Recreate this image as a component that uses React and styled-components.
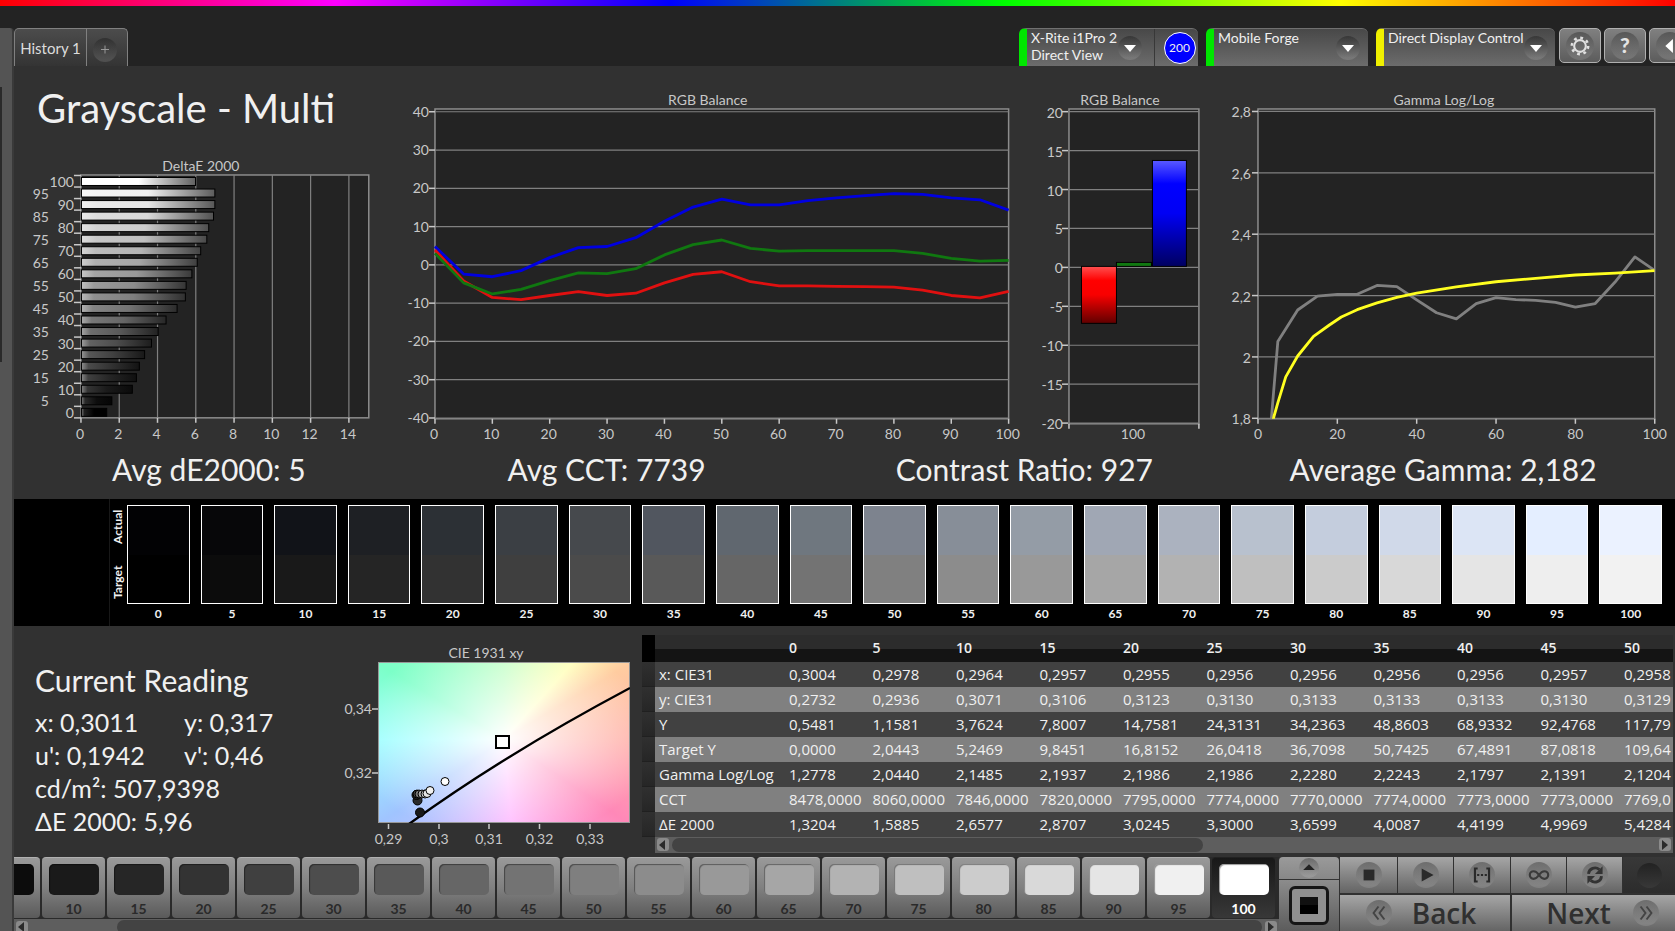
import React from "react";
import styled, { createGlobalStyle } from "styled-components";

const deltaE = [
  [100, 5.96], [95, 6.97], [90, 6.97], [85, 6.9], [80, 6.65], [75, 6.55], [70, 6.23],
  [65, 6.05], [60, 5.77], [55, 5.47], [50, 5.43], [45, 4.9969], [40, 4.4199], [35, 4.0087],
  [30, 3.6599], [25, 3.3], [20, 3.0245], [15, 2.8707], [10, 2.6577], [5, 1.5885], [0, 1.3204],
];

const balance = {
  "#0000e0": [4.8, -2.4, -3.1, -1.5, 1.9, 4.5, 4.8, 7.1, 11.4, 15.1, 17.2, 15.7, 15.7, 16.8, 17.5, 18.1, 18.6, 18.4, 17.5, 17, 14.3],
  "#e01010": [3.9, -4.2, -8.5, -9.1, -8, -7, -8, -7.4, -4.7, -2.5, -1.8, -4.4, -5.5, -5.5, -5.6, -5.7, -5.8, -6.6, -8, -8.6, -6.9],
  "#107810": [3, -4.7, -7.6, -6.4, -4.1, -2.1, -2.3, -1, 2.6, 5.3, 6.5, 4.3, 3.6, 3.7, 3.7, 3.7, 3.7, 3, 1.7, 1, 1.2],
};

const gamma = [1.2778, 2.05, 2.153, 2.198, 2.204, 2.204, 2.233, 2.229, 2.186, 2.144, 2.124, 2.174, 2.193, 2.187, 2.184, 2.178, 2.162, 2.174, 2.244, 2.326, 2.282];
const gammaTarget = [
  [3, 1.74], [4, 1.805], [5, 1.85], [7, 1.935], [10, 2.003], [14, 2.067], [18, 2.104], [21, 2.13], [25, 2.154],
  [30, 2.176], [35, 2.194], [40, 2.208], [50, 2.228], [60, 2.245], [70, 2.256], [80, 2.267], [90, 2.273], [100, 2.281],
];

const swatches = [
  [0, "#020204", "#000000"], [5, "#070709", "#0c0c0c"], [10, "#111318", "#191919"], [15, "#1e2024", "#252525"],
  [20, "#2c3035", "#323232"], [25, "#3b3f44", "#3f3f3f"], [30, "#46494d", "#4b4b4b"], [35, "#51565f", "#595959"],
  [40, "#60676f", "#666666"], [45, "#6f777f", "#737373"], [50, "#7d838e", "#808080"], [55, "#878e98", "#8c8c8c"],
  [60, "#949ca6", "#999999"], [65, "#a0a7b4", "#a6a6a6"], [70, "#abb2bf", "#b2b2b2"], [75, "#b8c1ce", "#bfbfbf"],
  [80, "#c4cddd", "#cbcbcb"], [85, "#d0d9e9", "#d8d8d8"], [90, "#dce5f5", "#e5e5e5"], [95, "#e4eeff", "#eeeeee"],
  [100, "#ebf2ff", "#f2f2f2"],
];

const levels = swatches.slice(2).map(([level]) => level);

const columns = [0, 5, 10, 15, 20, 25, 30, 35, 40, 45, 50];
const rows = [
  ["x: CIE31", "0,3004", "0,2978", "0,2964", "0,2957", "0,2955", "0,2956", "0,2956", "0,2956", "0,2956", "0,2957", "0,2958"],
  ["y: CIE31", "0,2732", "0,2936", "0,3071", "0,3106", "0,3123", "0,3130", "0,3133", "0,3133", "0,3133", "0,3130", "0,3129"],
  ["Y", "0,5481", "1,1581", "3,7624", "7,8007", "14,7581", "24,3131", "34,2363", "48,8603", "68,9332", "92,4768", "117,79"],
  ["Target Y", "0,0000", "2,0443", "5,2469", "9,8451", "16,8152", "26,0418", "36,7098", "50,7425", "67,4891", "87,0818", "109,64"],
  ["Gamma Log/Log", "1,2778", "2,0440", "2,1485", "2,1937", "2,1986", "2,1986", "2,2280", "2,2243", "2,1797", "2,1391", "2,1204"],
  ["CCT", "8478,0000", "8060,0000", "7846,0000", "7820,0000", "7795,0000", "7774,0000", "7770,0000", "7774,0000", "7773,0000", "7773,0000", "7769,0"],
  ["ΔE 2000", "1,3204", "1,5885", "2,6577", "2,8707", "3,0245", "3,3000", "3,6599", "4,0087", "4,4199", "4,9969", "5,4284"],
];

const range = (from, to, step) => {
  const out = [];
  for (let v = from; v <= to; v += step) out.push(v);
  return out;
};

const grey = (v) => `rgb(${Math.round(v)},${Math.round(v)},${Math.round(v)})`;

const DeltaEChart = () => {
  const left = 67;
  const top = 25;
  const unit = 19.15;
  const row = 11.55;
  return (
    <Chart viewBox="0 0 378 296" role="img" aria-label="DeltaE 2000 per gray level">
      <defs>
        {deltaE.map(([level]) => {
          const base = level * 2.55;
          return (
            <linearGradient id={`de${level}`} key={level}>
              <stop offset="0" stopColor={grey(Math.min(255, base + (255 - base) * 0.45))} />
              <stop offset="0.12" stopColor={grey(Math.min(255, base + (255 - base) * 0.12))} />
              <stop offset="0.5" stopColor={grey(base)} />
              <stop offset="1" stopColor={grey(base * 0.38)} />
            </linearGradient>
          );
        })}
      </defs>
      <text x="187" y="21" textAnchor="middle">DeltaE 2000</text>
      <Plot x={left} y={top} width="288" height="243" />
      {range(0, 14, 2).map((v) => (
        <g key={v}>
          {v > 0 && <Grid d={`M${left + v * unit} ${top}v243`} />}
          <Tick d={`M${left + v * unit} ${top + 243}v5`} />
          <text x={left + v * unit - 1} y="289" textAnchor="middle">{v}</text>
        </g>
      ))}
      {range(0, 21, 1).map((i) => (
        <Tick key={i} d={`M${left - 7} ${top + 0.5 + i * row}h7`} />
      ))}
      {deltaE.map(([level, value], i) => (
        <g key={level}>
          <rect x={left + 0.5} y={top + 2.5 + i * row} width={value * unit} height="8" fill={`url(#de${level})`} stroke="#000" />
          <text x={level % 10 ? 35 : 60} y={top + 12 + i * row} textAnchor="end">{level}</text>
        </g>
      ))}
    </Chart>
  );
};

const BalanceChart = () => {
  const x = (v) => 43 + v * 5.74;
  const y = (v) => 199 - v * 3.83;
  return (
    <Chart viewBox="0 0 636 380" role="img" aria-label="RGB balance by level">
      <text x="316" y="39" textAnchor="middle">RGB Balance</text>
      <Plot x="43" y="43" width="574" height="310" />
      {range(-40, 40, 10).map((v) => (
        <g key={v}>
          <Grid d={`M43 ${y(v)}h574`} />
          <Tick d={`M37 ${y(v)}h6`} />
          <text x="37" y={y(v) + 5} textAnchor="end">{v}</text>
        </g>
      ))}
      {range(0, 100, 10).map((v) => (
        <g key={v}>
          <Tick d={`M${x(v)} 353v5`} />
          <text x={x(v) - 1} y="373" textAnchor="middle">{v}</text>
        </g>
      ))}
      {Object.entries(balance).map(([color, values]) => (
        <Line key={color} stroke={color} points={values.map((v, i) => `${x(i * 5)},${y(v)}`).join(" ")} />
      ))}
    </Chart>
  );
};

const BalanceBars = () => {
  const y = (v) => 201.5 - v * 7.79;
  return (
    <Chart viewBox="0 0 190 380" role="img" aria-label="RGB balance at 100">
      <defs>
        <linearGradient id="barRed" x2="0" y2="1">
          <stop offset="0" stopColor="#ff5050" />
          <stop offset="0.25" stopColor="#ff0000" />
          <stop offset="0.5" stopColor="#f80000" />
          <stop offset="1" stopColor="#600000" />
        </linearGradient>
        <linearGradient id="barBlue" x2="0" y2="1">
          <stop offset="0" stopColor="#5a5aff" />
          <stop offset="0.22" stopColor="#0000ff" />
          <stop offset="0.5" stopColor="#0000f4" />
          <stop offset="1" stopColor="#000060" />
        </linearGradient>
      </defs>
      <text x="93" y="39" textAnchor="middle">RGB Balance</text>
      <Plot x="42" y="43" width="130" height="315" />
      {range(-20, 20, 5).map((v) => (
        <g key={v}>
          <Grid d={`M42 ${y(v)}h130`} />
          <Tick d={`M35 ${y(v)}h6`} />
          <text x="36" y={y(v) + 6} textAnchor="end">{v}</text>
        </g>
      ))}
      <Tick d="M42 358v5M172 358v5" />
      <text x="106" y="373" textAnchor="middle">100</text>
      <rect x="54.5" y="200.5" width="35" height="57" fill="url(#barRed)" stroke="#000" />
      <rect x="89.5" y="196.5" width="35" height="4" fill="#107810" stroke="#000" />
      <rect x="125.5" y="94.5" width="34" height="106" fill="url(#barBlue)" stroke="#000" />
    </Chart>
  );
};

const GammaChart = () => {
  const x = (v) => 41 + v * 3.97;
  const y = (v) => 45.5 + (2.8 - v) * 307;
  return (
    <Chart viewBox="0 0 458 380" role="img" aria-label="Gamma Log/Log">
      <clipPath id="gammaClip"><rect x="41" y="43" width="397" height="310" /></clipPath>
      <text x="227" y="39" textAnchor="middle">Gamma Log/Log</text>
      <Plot x="41" y="43" width="397" height="310" />
      {[2.8, 2.6, 2.4, 2.2, 2, 1.8].map((v) => (
        <g key={v}>
          <Grid d={`M41 ${y(v)}h397`} />
          <Tick d={`M35 ${y(v)}h6`} />
          <text x="34" y={y(v) + 6} textAnchor="end">{String(v).replace(".", ",")}</text>
        </g>
      ))}
      {range(0, 100, 20).map((v) => (
        <g key={v}>
          <Tick d={`M${x(v)} 353v5`} />
          <text x={x(v)} y="373" textAnchor="middle">{v}</text>
        </g>
      ))}
      <g clipPath="url(#gammaClip)">
        <Line stroke="#808080" points={gamma.map((v, i) => `${x(i * 5)},${y(v)}`).join(" ")} />
        <Line stroke="#ffff20" points={gammaTarget.map(([l, v]) => `${x(l)},${y(v)}`).join(" ")} />
      </g>
    </Chart>
  );
};

const CieChart = () => (
  <Chart viewBox="0 0 312 220" role="img" aria-label="CIE 1931 xy">
    <clipPath id="cieClip"><rect x="48" y="36" width="252" height="161" /></clipPath>
    <text x="156" y="32" textAnchor="middle">CIE 1931 xy</text>
    <foreignObject x="48" y="36" width="252" height="161"><CieField /></foreignObject>
    <rect x="48.5" y="36.5" width="251" height="160" fill="none" stroke="#989898" strokeWidth="1" />
    {[["0,34", 83], ["0,32", 147]].map(([label, y]) => (
      <g key={label}>
        <Tick d={`M42 ${y}h6`} />
        <text x="42" y={y + 5} textAnchor="end">{label}</text>
      </g>
    ))}
    {[["0,29", 58.5], ["0,3", 109], ["0,31", 159], ["0,32", 209.5], ["0,33", 260]].map(([label, x]) => (
      <g key={label}>
        <Tick d={`M${x} 198v5`} />
        <text x={x} y="218" textAnchor="middle">{label}</text>
      </g>
    ))}
    <g clipPath="url(#cieClip)">
      <path d="M79 198Q174 129 300 62" fill="none" stroke="#000" strokeWidth="2.4" />
      <g stroke="#000">
        <circle cx="90" cy="186.500" r="4.500" fill="#191919" />
        <circle cx="87.500" cy="174.500" r="4.500" fill="#2a2a2a" />
        <circle cx="86.500" cy="169" r="4.500" fill="#222" />
        <circle cx="87" cy="168" r="4" fill="#444" />
        <circle cx="89" cy="168" r="4" fill="#777" />
        <circle cx="92" cy="168" r="4" fill="#aaa" />
        <circle cx="95" cy="168" r="4" fill="#d0d0d0" />
        <circle cx="97" cy="167.500" r="4" fill="#e5e5e5" />
        <circle cx="100" cy="164.500" r="4" fill="#f2f2f2" />
        <circle cx="115" cy="155.500" r="4" fill="#fff" />
      </g>
      <rect x="166" y="110" width="13" height="12" fill="#fff" stroke="#000" strokeWidth="2" />
    </g>
  </Chart>
);

const Glyph = ({ size = 24, children }) => (
  <Round $size={size}>
    <svg width={size} height={size} viewBox="0 0 24 24" fill="none" aria-hidden="true">{children}</svg>
  </Round>
);

const Scroller = ({ start, width }) => (
  <ScrollTrack>
    <ScrollArrow aria-label="Scroll left"><svg width="11" height="12"><path d="M8 1v10L2 6z" fill="#2a2a2a" /></svg></ScrollArrow>
    <ScrollRail><ScrollThumb $start={start} $width={width} /></ScrollRail>
    <ScrollArrow aria-label="Scroll right"><svg width="11" height="12"><path d="M3 1v10l6-5z" fill="#2a2a2a" /></svg></ScrollArrow>
  </ScrollTrack>
);

const Device = ({ color, width, lines, children }) => (
  <DevicePanel $color={color} $width={width}>
    <DeviceButton aria-haspopup="menu">
      <span>{lines.map((line) => <DeviceLine key={line}>{line}</DeviceLine>)}</span>
      <Glyph><path d="M6 9h12l-6 7z" fill="#fff" /></Glyph>
    </DeviceButton>
    {children}
  </DevicePanel>
);

const App = () => (
  <>
    <GlobalStyle />
    <Page>
      <Rainbow />
      <Workspace>
        <SideEdge><SideSlot /></SideEdge>
        <Content>
          <TopBar>
            <Tabs>
              <Tab>History 1</Tab>
              <AddTab aria-label="Add tab">
                <Glyph><path d="M12 7.500v8M8 11.500h8" stroke="#999" /></Glyph>
              </AddTab>
            </Tabs>
            <Devices>
              <Device color="#00e600" width={179} lines={["X-Rite i1Pro 2", "Direct View"]}>
                <MeterMode><MeterCount>200</MeterCount></MeterMode>
              </Device>
              <Device color="#00e600" width={162} lines={["Mobile Forge"]} />
              <Device color="#f0f000" width={179} lines={["Direct Display Control"]} />
            </Devices>
            <Tools>
              <ToolButton aria-label="Settings">
                <Glyph size={28}>
                  <circle cx="12" cy="12" r="5" stroke="#e0e0e0" strokeWidth="1.800" />
                  <circle cx="12" cy="12" r="7" stroke="#e0e0e0" strokeWidth="2.200" strokeDasharray="2.400 3.098" />
                </Glyph>
              </ToolButton>
              <ToolButton aria-label="Help"><Glyph size={28}><QuestionMark x="12" y="18" textAnchor="middle">?</QuestionMark></Glyph></ToolButton>
              <ToolButton aria-label="Collapse"><Glyph size={28}><path d="M14.500 6v12L8 12z" fill="#fff" /></Glyph></ToolButton>
            </Tools>
          </TopBar>

          <Main>
            <Charts>
              <div>
                <Title>Grayscale - Multi</Title>
                <DeltaEChart />
              </div>
              <BalanceChart />
              <BalanceBars />
              <GammaChart />
            </Charts>
            <Stats>
              <Stat>Avg dE2000: 5</Stat>
              <Stat>Avg CCT: 7739</Stat>
              <Stat>Contrast Ratio: 927</Stat>
              <Stat>Average Gamma: 2,182</Stat>
            </Stats>

            <SwatchBand>
              <SwatchMargin />
              <SwatchSides><span>Target</span><span>Actual</span></SwatchSides>
              <SwatchGrid>
                {swatches.map(([level, actual, target]) => (
                  <SwatchItem key={level}>
                    <Swatch $actual={actual} $target={target} />
                    <SwatchLabel>{level}</SwatchLabel>
                  </SwatchItem>
                ))}
              </SwatchGrid>
            </SwatchBand>

            <Lower>
              <Reading>
                <ReadingTitle>Current Reading</ReadingTitle>
                <ReadingGrid>
                  <span>x: 0,3011</span><span>y: 0,317</span>
                  <span>u': 0,1942</span><span>v': 0,46</span>
                  <Wide>cd/m²: 507,9398</Wide>
                  <Wide>ΔE 2000: 5,96</Wide>
                </ReadingGrid>
              </Reading>
              <CieBox><CieChart /></CieBox>
              <DataPanel>
                <RowHandles>
                  <HeadHandle />
                  {rows.map(([name]) => <Handle key={name} />)}
                </RowHandles>
                <DataArea>
                  <DataScroll>
                    <Data>
                      <thead>
                        <tr>
                          <NameHead aria-label="Quantity" />
                          {columns.map((c) => <th key={c} scope="col">{c}</th>)}
                        </tr>
                      </thead>
                      <tbody>
                        {rows.map(([name, ...cells]) => (
                          <tr key={name}>
                            <th scope="row">{name}</th>
                            {cells.map((cell, i) => <td key={i}>{cell}</td>)}
                          </tr>
                        ))}
                      </tbody>
                    </Data>
                  </DataScroll>
                  <Scroller start={0} width={54} />
                </DataArea>
              </DataPanel>
            </Lower>

            <Footer>
              <LevelArea>
                <LevelList>
                  <Level aria-label="5"><LevelChip $color={grey(12)} /></Level>
                  {levels.map((level) => (
                    <Level key={level} $active={level === 100}>
                      <LevelChip $color={grey(level === 95 ? 240 : level * 2.55)} />
                      {level}
                    </Level>
                  ))}
                </LevelList>
                <Scroller start={7} width={93} />
              </LevelArea>
              <PatternColumn>
                <PatternUp aria-label="Show patterns"><Glyph size={20}><path d="M5 14.500h14l-7-7z" fill="#222" /></Glyph></PatternUp>
                <PatternButton aria-label="Window pattern"><PatternFrame><PatternWindow /></PatternFrame></PatternButton>
              </PatternColumn>
              <Transport>
                <MediaRow>
                  <MediaButton aria-label="Stop"><Glyph size={26}><path d="M7 7h10v10H7z" fill="#2a2a2a" /></Glyph></MediaButton>
                  <MediaButton aria-label="Play"><Glyph size={26}><path d="M8 6l11 6-11 6z" fill="#2a2a2a" /></Glyph></MediaButton>
                  <MediaButton aria-label="Read range">
                    <Glyph size={26}>
                      <path d="M8 6H5.500v12H8M16 6h2.500v12H16" stroke="#2a2a2a" strokeWidth="2" />
                      <path d="M7.500 12h9" stroke="#2a2a2a" strokeWidth="2" strokeDasharray="2 1.500" />
                    </Glyph>
                  </MediaButton>
                  <MediaButton aria-label="Continuous">
                    <Glyph size={26}>
                      <path d="M12 12C10 9 8.500 8.500 7 8.500a3.500 3.500 0 0 0 0 7c1.500 0 3-.5 5-3.500s3.500-3.500 5-3.500a3.500 3.500 0 0 1 0 7c-1.500 0-3-.5-5-3.500z" stroke="#3a3a3a" strokeWidth="2" />
                    </Glyph>
                  </MediaButton>
                  <MediaButton aria-label="Refresh">
                    <Glyph size={26}>
                      <path d="M6 11a6 6 0 0 1 10-4M18 13a6 6 0 0 1-10 4" stroke="#333" strokeWidth="2.600" />
                      <path d="M19 4v7h-7zM5 20v-7h7z" fill="#333" />
                    </Glyph>
                  </MediaButton>
                  <RecordButton aria-label="Record"><Lamp /></RecordButton>
                </MediaRow>
                <NavRow>
                  <BackButton>
                    <Glyph size={26}><path d="M11.500 6L7 12l4.500 6M17 6l-4.500 6 4.500 6" stroke="#444" strokeWidth="1.800" /></Glyph>
                    Back
                  </BackButton>
                  <NextButton>
                    Next
                    <Glyph size={26}><path d="M7 6l4.500 6L7 18M12.500 6l4.500 6-4.500 6" stroke="#444" strokeWidth="1.800" /></Glyph>
                  </NextButton>
                </NavRow>
              </Transport>
            </Footer>
          </Main>
        </Content>
      </Workspace>
    </Page>
  </>
);

const GlobalStyle = createGlobalStyle`
  * {
    box-sizing: border-box;
  }
  body {
    margin: 0;
    background: #232323;
    color: #f0f0f0;
    font-family: Lato, "Open Sans", sans-serif;
    font-size: 14px;
    overflow: hidden;
  }
  button {
    font: inherit;
    color: inherit;
    border: none;
    padding: 0;
    background: none;
    cursor: pointer;
  }
`;
const Page = styled.div`
  display: flex;
  flex-direction: column;
  min-height: 100vh;
`;
const Rainbow = styled.div`
  height: 6px;
  background: linear-gradient(to right, #f00, #f0f 20%, #00f 40%, #0f0 60%, #ff0 80%, #f00);
`;
const Workspace = styled.div`
  display: flex;
  flex: 1;
`;
const SideEdge = styled.aside`
  width: 14px;
  margin-top: 22px;
  background: #545454;
  border-right: 2px solid #3a3a3a;
  border-radius: 0 4px 0 0;
`;
const SideSlot = styled.div`
  width: 2px;
  height: 275px;
  margin-top: 59px;
  background: #2a2a2a;
`;
const Content = styled.div`
  flex: 1;
  min-width: 0;
  display: flex;
  flex-direction: column;
`;
const TopBar = styled.header`
  display: flex;
  height: 60px;
  padding-top: 22px;
  overflow: hidden;
`;
const Tabs = styled.nav`
  display: flex;
  height: 38px;
  border: 1px solid #808080;
  border-bottom: none;
  border-radius: 5px 5px 0 0;
  background: linear-gradient(#4c4c4c, #343434);
`;
const Tab = styled.button`
  width: 72px;
  border-right: 1px solid #808080;
  font-size: 15px;
  color: #dcdcdc;
`;
const Round = styled.span`
  display: inline-flex;
  flex: none;
  width: ${(props) => props.$size}px;
  height: ${(props) => props.$size}px;
  border-radius: 50%;
  background: linear-gradient(rgba(0, 0, 0, 0.3), rgba(255, 255, 255, 0.12) 90%);
`;
const AddTab = styled.button`
  display: flex;
  align-items: center;
  justify-content: center;
  width: 40px;
  padding: 4px 4px 0 0;
`;
const Devices = styled.div`
  display: flex;
  gap: 8px;
  margin-left: auto;
`;
const DevicePanel = styled.div`
  display: flex;
  width: ${(props) => props.$width}px;
  height: 38px;
  border-top: 1px solid #707070;
  border-left: 8px solid ${(props) => props.$color};
  border-radius: 6px 6px 0 0;
  background: linear-gradient(#484848, #6c6c6c);
`;
const DeviceButton = styled.button`
  display: flex;
  flex: 1;
  align-items: center;
  justify-content: space-between;
  padding: 0 8px 0 4px;
  text-align: left;
  white-space: nowrap;
  > span:first-child {
    align-self: flex-start;
  }
  &:not(:last-child) {
    padding-right: 12px;
  }
`;
const DeviceLine = styled.span`
  display: block;
  line-height: 17px;
`;
const MeterMode = styled.div`
  display: flex;
  align-items: center;
  justify-content: center;
  width: 44px;
  padding-left: 6px;
  border-left: 1px solid #383838;
`;
const MeterCount = styled.span`
  width: 32px;
  height: 32px;
  border: 1px solid #fff;
  border-radius: 50%;
  background: #00f;
  font-size: 12px;
  line-height: 30px;
  text-align: center;
`;
const Tools = styled.div`
  display: flex;
  gap: 3px;
  width: 120px;
  padding-left: 4px;
  overflow: hidden;
`;
const ToolButton = styled.button`
  display: flex;
  flex: none;
  align-items: center;
  justify-content: center;
  width: 42px;
  height: 35px;
  border: 1px solid #b0b0b0;
  border-radius: 5px;
  background: linear-gradient(#808080, #5c5c5c);
`;
const QuestionMark = styled.text`
  fill: #e4e4e4;
  font-size: 18px;
  font-weight: 900;
`;
const Main = styled.main`
  display: flex;
  flex: 1;
  flex-direction: column;
  background: #313131;
`;
const Charts = styled.section`
  display: grid;
  grid-template-columns: 378fr 636fr 190fr 458fr;
`;
const Title = styled.h1`
  margin: 0;
  height: 84px;
  padding-left: 23px;
  font-size: 40px;
  font-weight: 400;
  line-height: 84px;
  white-space: nowrap;
`;
const Chart = styled.svg`
  display: block;
  width: 100%;
  height: auto;
  text {
    fill: #c8c8c8;
    font-size: 14px;
  }
`;
const Plot = styled.rect`
  fill: #232323;
  stroke: #8c8c8c;
  stroke-width: 1.5;
`;
const Grid = styled.path`
  stroke: #808080;
  stroke-width: 1.2;
`;
const Tick = styled.path`
  stroke: #c8c8c8;
  stroke-width: 1.5;
`;
const Line = styled.polyline`
  fill: none;
  stroke-width: 2.8;
  stroke-linejoin: round;
`;
const Stats = styled.section`
  display: grid;
  grid-template-columns: 390fr 406fr 430fr 408fr;
  height: 53px;
  padding-right: 28px;
`;
const Stat = styled.div`
  font-size: 30px;
  line-height: 46px;
  text-align: center;
  white-space: nowrap;
`;
const SwatchBand = styled.section`
  display: flex;
  height: 127px;
  padding: 6px 13px 0 0;
  background: #000;
`;
const SwatchMargin = styled.div`
  width: 96px;
  margin-top: -6px;
  border-right: 1px solid #181818;
`;
const SwatchSides = styled.div`
  display: flex;
  justify-content: space-between;
  width: 17px;
  height: 99px;
  padding: 5px 0;
  writing-mode: vertical-rl;
  transform: rotate(180deg);
  font-size: 12px;
  font-weight: 700;
  line-height: 16px;
`;
const SwatchGrid = styled.div`
  display: grid;
  flex: 1;
  grid-template-columns: repeat(21, 1fr);
  gap: 11px;
`;
const SwatchItem = styled.div`
  text-align: center;
`;
const Swatch = styled.div`
  height: 99px;
  border: 1px solid #fff;
  background: linear-gradient(${(props) => props.$actual} 50%, ${(props) => props.$target} 50%);
`;
const SwatchLabel = styled.div`
  font-size: 12px;
  font-weight: 700;
  line-height: 20px;
`;
const Lower = styled.section`
  display: flex;
  flex: 1;
`;
const Reading = styled.div`
  width: 316px;
  padding: 36px 0 0 21px;
`;
const ReadingTitle = styled.h2`
  margin: 0 0 8px;
  font-size: 30px;
  font-weight: 400;
  line-height: 36px;
`;
const ReadingGrid = styled.div`
  display: grid;
  grid-template-columns: 149px 1fr;
  font-size: 25px;
  line-height: 33px;
`;
const Wide = styled.span`
  grid-column: span 2;
`;
const CieBox = styled.div`
  width: 312px;
`;
const CieField = styled.div`
  width: 100%;
  height: 100%;
  background:
    radial-gradient(ellipse at 50% 48%, #fff, rgba(255, 255, 255, 0.6) 32%, rgba(255, 255, 255, 0) 85%),
    conic-gradient(from 0deg at 50% 48%, #c0ffc4, #ffffb8 42deg, #ffcca0 59deg, #ffb0a8 90deg, #ff88b8 124deg, #ffb8ff 175deg, #a0c4ff 236deg, #98ffff 270deg, #7cffc8 301deg, #c0ffc4);
`;
const DataPanel = styled.div`
  display: flex;
  flex: 1;
  min-width: 0;
  padding: 9px 2px 0 0;
`;
const RowHandles = styled.div`
  width: 13px;
`;
const HeadHandle = styled.div`
  height: 27px;
  background: #000;
`;
const Handle = styled.div`
  height: 25px;
  border-bottom: 1px solid #202020;
  background: linear-gradient(#303030, #262626);
`;
const DataArea = styled.div`
  flex: 1;
  min-width: 0;
`;
const DataScroll = styled.div`
  overflow: hidden;
`;
const Data = styled.table`
  width: 103%;
  border-collapse: collapse;
  table-layout: fixed;
  font-family: "Open Sans", "Noto Sans", sans-serif;
  font-size: 15px;
  white-space: nowrap;
  th,
  td {
    height: 25px;
    padding: 0 0 0 4px;
    font-weight: 400;
    line-height: 20px;
    text-align: left;
  }
  thead tr {
    background: linear-gradient(#2c2c2c 50%, #141414 50%);
  }
  thead th {
    height: 27px;
    font-size: 14px;
    font-weight: 600;
  }
  tbody tr {
    background: #414141;
  }
  tbody tr:nth-child(even) {
    background: #808080;
  }
`;
const NameHead = styled.th`
  width: 130px;
`;
const ScrollTrack = styled.div`
  display: flex;
  align-items: center;
  height: 16px;
  padding: 0 2px;
  background: #5e5e5e;
`;
const ScrollArrow = styled.button`
  display: flex;
  align-items: center;
  width: 12px;
  height: 13px;
  border-radius: 3px;
  background: #8a8a8a;
`;
const ScrollRail = styled.div`
  flex: 1;
  margin: 0 3px;
`;
const ScrollThumb = styled.div`
  width: ${(props) => props.$width}%;
  height: 14px;
  margin-left: ${(props) => props.$start}%;
  border-radius: 7px;
  background: #434343;
`;
const Footer = styled.footer`
  display: flex;
  height: 74px;
  overflow: hidden;
`;
const LevelArea = styled.div`
  flex: 1;
  min-width: 0;
  background: #2a2a2a;
`;
const LevelList = styled.div`
  display: flex;
  gap: 2px;
  justify-content: flex-end;
  height: 62px;
  padding-right: 4px;
  overflow: hidden;
`;
const Level = styled.button`
  display: flex;
  flex: none;
  flex-direction: column;
  align-items: center;
  width: 63px;
  height: 61px;
  padding-top: 6px;
  border-top: 1px solid ${(props) => (props.$active ? "#222" : "#b0b0b0")};
  border-radius: 4px;
  background: ${(props) => (props.$active ? "linear-gradient(#181818, #383838)" : "linear-gradient(#999, #808080 50%, #5a5a5a)")};
  color: ${(props) => (props.$active ? "#fff" : "#2a2a2a")};
  font-weight: 700;
  line-height: 28px;
`;
const LevelChip = styled.span`
  flex: none;
  width: 50px;
  height: 31px;
  border-radius: 5px;
  box-shadow: inset 1px 1px 1px rgba(0, 0, 0, 0.4);
  background: ${(props) => props.$color};
`;
const PatternColumn = styled.div`
  display: flex;
  flex-direction: column;
  width: 60px;
`;
const PatternUp = styled.button`
  height: 23px;
  border-bottom: 1px solid #333;
  border-radius: 4px 4px 0 0;
  background: linear-gradient(#9a9a9a, #888);
  line-height: 0;
`;
const PatternButton = styled.button`
  display: flex;
  flex: 1;
  align-items: center;
  justify-content: center;
  background: linear-gradient(#8c8c8c, #5c5c5c);
`;
const PatternFrame = styled.span`
  padding: 8px;
  border: 3px solid #161616;
  border-radius: 6px;
  background: #909090;
`;
const PatternWindow = styled.span`
  display: block;
  width: 18px;
  height: 17px;
  background: linear-gradient(#111 50%, #000 50%);
`;
const Transport = styled.div`
  display: flex;
  flex-direction: column;
  gap: 2px;
  width: 336px;
  padding-left: 1px;
`;
const MediaRow = styled.div`
  display: grid;
  grid-template-columns: 57px 55px 56px 55px 55px 1fr;
  gap: 1px;
  height: 36px;
`;
const MediaButton = styled.button`
  display: flex;
  align-items: center;
  justify-content: center;
  background: linear-gradient(#a6a6a6, #646464);
`;
const RecordButton = styled(MediaButton)`
  background: linear-gradient(#383838, #2c2c2c);
`;
const Lamp = styled.span`
  width: 25px;
  height: 25px;
  border-radius: 50%;
  background: linear-gradient(#222, #383838);
`;
const NavRow = styled.div`
  display: grid;
  flex: 1;
  grid-template-columns: 170px 1fr;
  gap: 2px;
`;
const NavButton = styled.button`
  display: flex;
  align-items: center;
  justify-content: center;
  gap: 20px;
  background: linear-gradient(#a6a6a6, #646464);
  color: #303030;
  font-family: "Open Sans", "Noto Sans", sans-serif;
  font-size: 28px;
  font-weight: 600;
  line-height: 36px;
`;
const BackButton = styled(NavButton)`
  padding-right: 8px;
`;
const NextButton = styled(NavButton)`
  gap: 22px;
  padding-left: 18px;
`;

export default App;
